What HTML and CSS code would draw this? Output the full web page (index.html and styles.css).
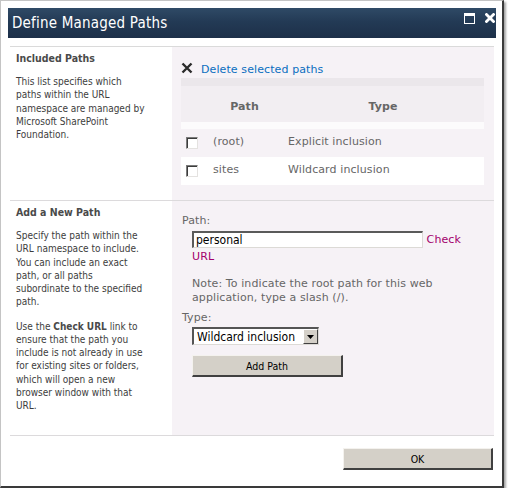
FILE: index.html
```html
<!DOCTYPE html>
<html>
<head>
<meta charset="utf-8">
<title>Define Managed Paths</title>
<link rel="stylesheet" href="styles.css">
</head>
<body>
<div class="window">
  <div class="titlebar">
    <span class="title">Define Managed Paths</span>
    <span class="title-icons">
      <svg width="11" height="11" viewBox="0 0 11 11"><rect x="0.5" y="0.5" width="10" height="10" fill="none" stroke="#fff" stroke-width="1"/><rect x="1" y="1" width="9" height="2" fill="#fff"/></svg>
      <svg width="10" height="10" viewBox="0 0 10 10"><path d="M1.5 1.5 L8.5 8.5 M8.5 1.5 L1.5 8.5" stroke="#fff" stroke-width="2.8" stroke-linecap="square"/></svg>
    </span>
  </div>
  <div class="rule"></div>

  <div class="section">
    <div class="desc">
      <h3 class="desc-title">Included Paths</h3>
      <p class="desc-text">This list specifies which<br>paths within the URL<br>namespace are managed by<br>Microsoft SharePoint<br>Foundation.</p>
    </div>
    <div class="panel panel-list">
      <div class="toolbar">
        <svg class="del-icon" width="12" height="12" viewBox="0 0 12 12"><path d="M1.5 1.5 L10.5 10.5 M10.5 1.5 L1.5 10.5" stroke="#2b2b2b" stroke-width="2.4"/></svg>
        <a class="link-blue" href="#">Delete selected paths</a>
      </div>
      <table class="paths">
        <colgroup><col class="col-check"><col class="col-path"><col class="col-type"></colgroup>
        <thead>
          <tr class="band"><td colspan="3"></td></tr>
          <tr class="head"><th></th><th>Path</th><th>Type</th></tr>
        </thead>
        <tbody>
          <tr class="spacer"><td colspan="3"></td></tr>
          <tr class="row-alt"><td class="c-check"><input type="checkbox" class="chk"></td><td>(root)</td><td>Explicit inclusion</td></tr>
          <tr class="row-white"><td class="c-check"><input type="checkbox" class="chk"></td><td>sites</td><td>Wildcard inclusion</td></tr>
        </tbody>
      </table>
    </div>
  </div>

  <div class="section">
    <div class="desc">
      <h3 class="desc-title">Add a New Path</h3>
      <p class="desc-text">Specify the path within the<br>URL namespace to include.<br>You can include an exact<br>path, or all paths<br>subordinate to the specified<br>path.</p>
      <p class="desc-text gap">Use the <b>Check URL</b> link to<br>ensure that the path you<br>include is not already in use<br>for existing sites or folders,<br>which will open a new<br>browser window with that<br>URL.</p>
    </div>
    <div class="panel panel-form">
      <div class="label">Path:</div>
      <div class="field path-field">
        <input class="text-input" type="text" value="personal"> <a class="link-magenta" href="#">Check URL</a>
      </div>
      <div class="note">Note: To indicate the root path for this web<br>application, type a slash (/).</div>
      <div class="label type-label">Type:</div>
      <div class="field">
        <span class="select-wrap">
          <select class="select"><option>Wildcard inclusion</option><option>Explicit inclusion</option></select>
          <span class="select-btn"><svg width="7" height="4" viewBox="0 0 7 4"><path d="M0 0 H7 L3.5 4 Z" fill="#000"/></svg></span>
        </span>
      </div>
      <div class="field">
        <button class="btn btn-add" type="button">Add Path</button>
      </div>
    </div>
  </div>

  <div class="footer">
    <button class="btn btn-ok" type="button">OK</button>
  </div>
</div>
</body>
</html>
```

FILE: styles.css
```css
html, body {
  margin: 0;
  padding: 0;
  background: #fff;
}

body {
  font-family: "DejaVu Sans Condensed", "DejaVu Sans", sans-serif;
  font-size: 10px;
  color: #3d3d3d;
}

.window {
  box-sizing: border-box;
  width: 504px;
  height: 488px;
  background: #fff;
  border-left: 1px solid #c4c4c4;
  border-top: 1px solid #c4c4c4;
  border-right: 2px solid #3a3a3a;
  border-bottom: 2px solid #3a3a3a;
  box-shadow: 2px 2px 2px rgba(0, 0, 0, 0.35);
  padding: 7px 6px 0 7px;
}

.titlebar {
  height: 30px;
  background: linear-gradient(#2f4a66, #233a55 45%, #1d3049);
  display: flex;
  align-items: center;
  justify-content: space-between;
  padding: 0 1px 0 4px;
}

.title {
  color: #fff;
  font-size: 15px;
  letter-spacing: 0.2px;
  line-height: 30px;
}

.title-icons {
  display: flex;
  align-self: flex-start;
  gap: 10px;
  margin-top: 5px;
}

.title-icons svg {
  display: block;
}

.rule {
  height: 1px;
  background: #dadada;
  margin: 8px 2px 0 2px;
}

.section {
  display: grid;
  grid-template-columns: 162px 322px;
  margin: 0 2px;
  border-bottom: 1px solid #dcdadc;
}

.desc {
  padding: 4px 6px 0 6px;
}

.desc-title {
  margin: 0;
  font-size: 10.5px;
  font-weight: bold;
  line-height: 14px;
  color: #4a4a4a;
}

.desc-text {
  margin: 10px 0 0 0;
  line-height: 13.25px;
  color: #3d3d3d;
}

.desc-text.gap {
  margin-top: 11px;
}

.desc-text b {
  color: #4a4a4a;
}

.panel {
  background: #f6f2f6;
  font-family: "DejaVu Sans", sans-serif;
  font-size: 11px;
  letter-spacing: 0.1px;
}

.panel-list {
  padding: 15px 10px 15px 9px;
}

.toolbar {
  display: flex;
  align-items: flex-end;
  height: 16px;
  gap: 8px;
}

.del-icon {
  display: block;
  align-self: flex-start;
}

.link-blue {
  color: #0a6ec0;
  text-decoration: none;
  line-height: 14px;
  padding-bottom: 1px;
}

.paths {
  width: 303px;
  border-collapse: collapse;
  border-spacing: 0;
  table-layout: fixed;
}

.col-check { width: 26px; }
.col-path { width: 75px; }
.col-type { width: 202px; }

.paths .band td {
  height: 8px;
  padding: 0;
  background: #ebe7eb;
}

.paths .head {
  background: #f2eef2;
}

.paths th {
  font-weight: bold;
  color: #666;
  text-align: center;
  padding: 4px 0 0 0;
  height: 36px;
  box-sizing: border-box;
}

.paths td {
  padding: 0 0 3px 6px;
  color: #666;
  height: 28px;
  box-sizing: border-box;
  vertical-align: middle;
  white-space: nowrap;
}

.paths td.c-check {
  padding: 0 0 0 5px;
}

.paths .spacer td {
  height: 7px;
  padding: 0;
  background: #fcfbfc;
}

.row-alt { background: #f6f2f6; }
.row-white { background: #fff; }

.chk {
  appearance: none;
  -webkit-appearance: none;
  display: block;
  margin: 0;
  width: 12px;
  height: 12px;
  background: #fff;
  border-top: 1px solid #7b7b7b;
  border-left: 1px solid #7b7b7b;
  border-right: 1px solid #e4e2e0;
  border-bottom: 1px solid #e4e2e0;
  box-shadow: inset 1px 1px 0 #3c3c3c;
  box-sizing: border-box;
}

.panel-form {
  padding: 13px 10px 0 10px;
  box-sizing: border-box;
  height: 234px;
}

.label {
  color: #666;
  line-height: 14px;
}

.field {
  margin-left: 10px;
}

.path-field {
  width: 282px;
  margin-top: 3px;
  line-height: 17px;
}

.text-input {
  box-sizing: border-box;
  width: 231px;
  height: 17px;
  margin: 0;
  padding: 0 2px;
  vertical-align: top;
  font-family: "DejaVu Sans Condensed", "DejaVu Sans", sans-serif;
  font-size: 12px;
  letter-spacing: 0;
  color: #000;
  background: #fff;
  border-top: 2px solid #5a5a5a;
  border-left: 2px solid #5a5a5a;
  border-right: 1px solid #dcdad6;
  border-bottom: 1px solid #dcdad6;
  outline: none;
}

.link-magenta {
  color: #a3006c;
  text-decoration: none;
}

.note {
  margin: 12px 0 0 10px;
  color: #666;
  line-height: 14px;
}

.type-label {
  margin-top: 6px;
}

.select-wrap {
  display: inline-flex;
  margin-top: 2px;
  width: 127px;
  height: 18px;
  box-sizing: border-box;
  background: #fff;
  border-top: 2px solid #555;
  border-left: 2px solid #555;
  border-right: 1px solid #dcdad6;
  border-bottom: 1px solid #dcdad6;
}

.select {
  appearance: none;
  -webkit-appearance: none;
  flex: 1;
  min-width: 0;
  border: 0;
  margin: 0;
  padding: 0 0 0 3px;
  background: #fff;
  font-family: "DejaVu Sans Condensed", "DejaVu Sans", sans-serif;
  font-size: 12px;
  letter-spacing: 0;
  color: #000;
  outline: none;
}

.select-btn {
  width: 15px;
  box-sizing: border-box;
  background: #d4d0c8;
  border-top: 1px solid #fff;
  border-left: 1px solid #fff;
  border-right: 1px solid #404040;
  border-bottom: 1px solid #404040;
  display: flex;
  align-items: center;
  justify-content: center;
}

.select-btn svg { display: block; }

.btn {
  box-sizing: border-box;
  height: 22px;
  margin: 0;
  padding: 0;
  background: #d4d0c8;
  font-family: "DejaVu Sans Condensed", "DejaVu Sans", sans-serif;
  font-size: 10.5px;
  letter-spacing: 0;
  color: #000;
  border-top: 1px solid #f4f2ee;
  border-left: 1px solid #f4f2ee;
  border-right: 2px solid #404040;
  border-bottom: 2px solid #404040;
}

.btn-add {
  width: 151px;
  margin-top: 10px;
}

.footer {
  display: flex;
  justify-content: flex-end;
  padding: 12px 3px 0 0;
}

.btn-ok {
  width: 150px;
}
```
